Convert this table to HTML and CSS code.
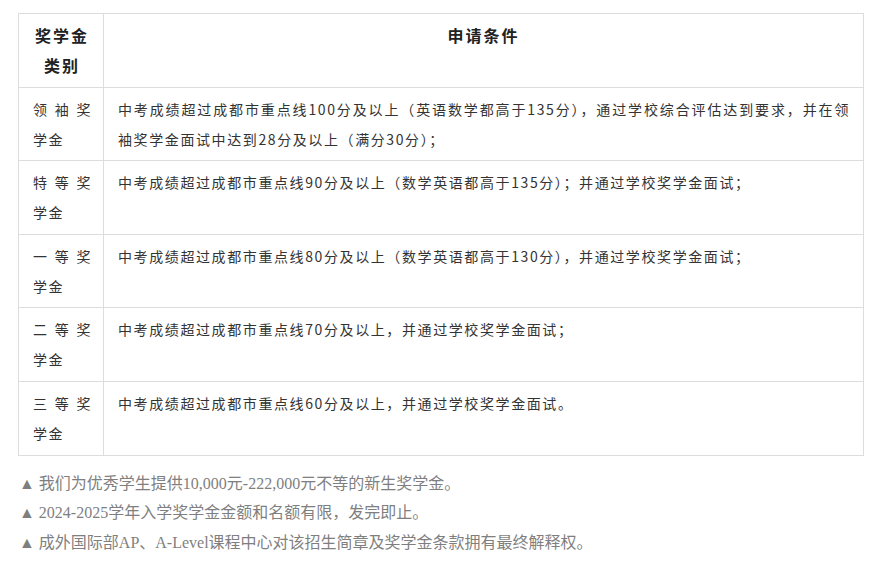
FILE: index.html
```html
<!DOCTYPE html>
<html lang="zh-CN">
<head>
<meta charset="utf-8">
<title>奖学金</title>
<link rel="stylesheet" href="styles.css">
</head>
<body>
<div class="page">
  <table class="grid">
    <colgroup>
      <col class="col-type">
      <col class="col-cond">
    </colgroup>
    <thead>
      <tr>
        <th class="type-head">奖学金类别</th>
        <th class="cond-head">申请条件</th>
      </tr>
    </thead>
    <tbody>
      <tr>
        <td class="type">领袖奖学金</td>
        <td class="cond">中考成绩超过成都市重点线100分及以上（英语数学都高于135分），通过学校综合评估达到要求，并在领袖奖学金面试中达到28分及以上（满分30分）；</td>
      </tr>
      <tr>
        <td class="type">特等奖学金</td>
        <td class="cond">中考成绩超过成都市重点线90分及以上（数学英语都高于135分）；并通过学校奖学金面试；</td>
      </tr>
      <tr>
        <td class="type">一等奖学金</td>
        <td class="cond">中考成绩超过成都市重点线80分及以上（数学英语都高于130分），并通过学校奖学金面试；</td>
      </tr>
      <tr>
        <td class="type">二等奖学金</td>
        <td class="cond">中考成绩超过成都市重点线70分及以上，并通过学校奖学金面试；</td>
      </tr>
      <tr>
        <td class="type">三等奖学金</td>
        <td class="cond">中考成绩超过成都市重点线60分及以上，并通过学校奖学金面试。</td>
      </tr>
    </tbody>
  </table>
  <div class="notes">
    <p class="note">▲ 我们为优秀学生提供10,000元-222,000元不等的新生奖学金。</p>
    <p class="note">▲ 2024-2025学年入学奖学金金额和名额有限，发完即止。</p>
    <p class="note">▲ 成外国际部AP、A-Level课程中心对该招生简章及奖学金条款拥有最终解释权。</p>
  </div>
</div>
</body>
</html>
```

FILE: styles.css
```css
html, body {
  margin: 0;
  padding: 0;
  background: #ffffff;
}

.page {
  padding: 13px 0 0 18px;
}

.grid {
  border-collapse: collapse;
  table-layout: fixed;
  width: 846px;
  font-family: "Noto Sans CJK SC", "Noto Sans", sans-serif;
}

.col-type {
  width: 85px;
}

.grid th,
.grid td {
  border: 1px solid #dddddd;
  vertical-align: top;
  line-height: 30px;
  padding-top: 6px;
  padding-bottom: 6.6px;
}

.grid th {
  font-size: 16px;
  font-weight: bold;
  color: #222222;
  letter-spacing: 2px;
  text-align: center;
}

.type-head {
  padding-left: 14px;
  padding-right: 12px;
}

.grid td {
  font-size: 14px;
  color: #333333;
  letter-spacing: 1.6px;
  text-align: justify;
}

.type {
  padding-left: 14px;
  padding-right: 11px;
}

.cond {
  padding-left: 14px;
  padding-right: 13px;
}

.notes {
  padding-top: 13px;
  padding-left: 1px;
}

.note {
  margin: 0;
  font-family: "Liberation Serif", "Noto Sans CJK SC", serif;
  font-size: 16px;
  line-height: 29.5px;
  color: #7f7f7f;
}
```
